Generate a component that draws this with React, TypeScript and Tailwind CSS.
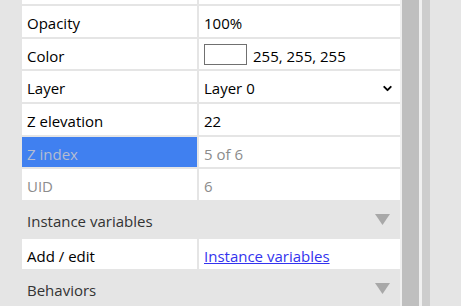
import React from 'react';
import { ChevronDown } from 'lucide-react';

type Row = {
  label: string;
  value?: React.ReactNode;
  muted?: boolean;
  selected?: boolean;
};

const rows: Row[] = [
  { label: 'Opacity', value: '100%' },
  {
    label: 'Color',
    value: (
      <span className="flex items-center gap-[6px]">
        <span className="block w-[43px] h-[21px] -mt-[3px] border border-[#707070] bg-white" />
        <span>255, 255, 255</span>
      </span>
    ),
  },
  {
    label: 'Layer',
    value: (
      <span className="flex items-center justify-between w-full pr-[6px]">
        <span>Layer 0</span>
        <ChevronDown className="w-[13px] h-[13px] -mt-[1px] text-black" strokeWidth={3.5} />
      </span>
    ),
  },
  { label: 'Z elevation', value: '22' },
  { label: 'Z index', value: '5 of 6', muted: true, selected: true },
  { label: 'UID', value: '6', muted: true },
];

const Triangle = () => (
  <svg width="15" height="11" viewBox="0 0 15 11" className="mr-[10px] -mt-[4px]">
    <polygon points="0,0 15,0 7.5,11" fill="#a8a8a8" />
  </svg>
);

const PropRow = ({ row }: { row: Row }) => (
  <div className="flex gap-[2px] h-[31px]">
    <div
      className={`w-[175px] shrink-0 flex items-center pl-[5px] pt-[4px] ${
        row.selected ? 'bg-[#4080f0] text-[#b4bcd0]' : row.muted ? 'bg-white text-[#8c8c8c]' : 'bg-white text-black'
      }`}
    >
      {row.label}
    </div>
    <div
      className={`flex-1 flex items-center pl-[5px] pt-[4px] bg-white ${row.muted ? 'text-[#8c8c8c]' : 'text-black'}`}
    >
      {row.value}
    </div>
  </div>
);

const Section = ({ title }: { title: string }) => (
  <div className="h-[35px] flex items-center justify-between pl-[5px] pt-[4px] text-[#333]">
    <span>{title}</span>
    <Triangle />
  </div>
);

export default function App() {
  return (
    <div
      className="w-[461px] h-[306px] overflow-hidden flex bg-[#e5e5e5] text-[15px]"
      style={{ fontFamily: '"Open Sans", "Noto Sans", sans-serif' }}
    >
      {/* Properties table */}
      <div className="w-[400px] pl-[22px] flex flex-col gap-[2px] shrink-0">
        <div className="flex gap-[2px] h-[4px]">
          <div className="w-[175px] bg-white" />
          <div className="flex-1 bg-white" />
        </div>
        {rows.map((row) => (
          <PropRow key={row.label} row={row} />
        ))}
        <Section title="Instance variables" />
        <div className="flex gap-[2px] h-[31px]">
          <div className="w-[175px] shrink-0 flex items-center pl-[5px] pt-[4px] bg-white text-black">Add / edit</div>
          <div className="flex-1 flex items-center pl-[5px] pt-[4px] bg-white">
            <a href="#" className="text-[#3333ee] underline">
              Instance variables
            </a>
          </div>
        </div>
        <Section title="Behaviors" />
      </div>

      {/* Scrollbar + side strip */}
      <div className="w-[2px] bg-[#f0f0f0]" />
      <div className="w-[17px] bg-[#bfbfbf]" />
      <div className="w-[3px] bg-[#f0f0f0]" />
      <div className="w-[8px] bg-[#cdcdcd]" />
      <div className="flex-1 bg-[#e5e5e5]" />
    </div>
  );
}
